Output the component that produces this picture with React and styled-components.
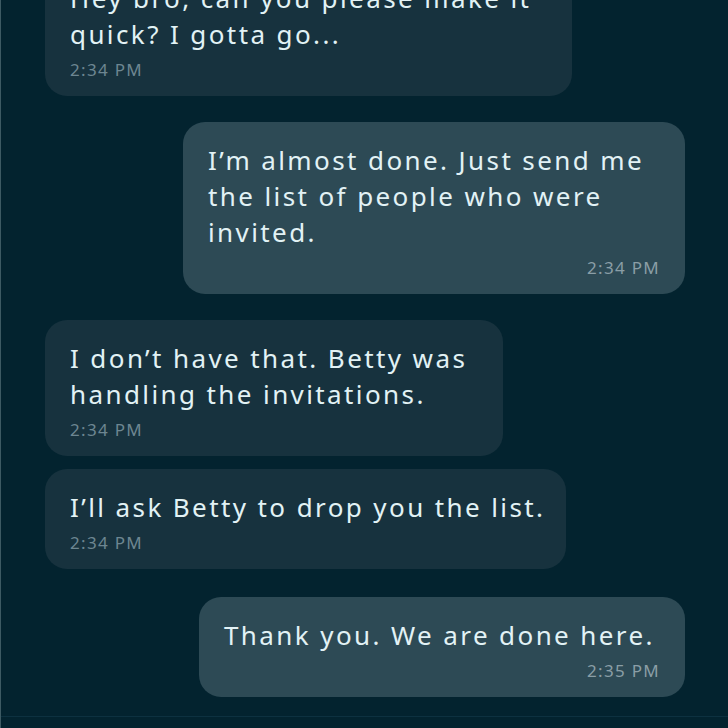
import React from "react";
import styled, { createGlobalStyle } from "styled-components";

const GlobalStyle = createGlobalStyle`
  html, body {
    margin: 0;
    padding: 0;
    background: #03232f;
    height: 100%;
    overflow: hidden;
  }
  #root {
    height: 100%;
  }
`;

const Screen = styled.div`
  position: relative;
  height: 728px;
  overflow: hidden;
  background: #03232f;
  border-left: 1px solid #3d5a63;
  box-sizing: border-box;
  font-family: "Noto Sans", "Lato", sans-serif;
`;

const Thread = styled.div`
  display: flex;
  flex-direction: column;
  padding: 0 43px 0 44px;
  margin-top: -40px;
`;

const Bubble = styled.div`
  box-sizing: border-box;
  width: ${p => p.$w}px;
  align-self: ${p => (p.$mine ? "flex-end" : "flex-start")};
  margin-top: ${p => p.$gap}px;
  padding: 20px 26px 16px 25px;
  border-radius: 22px;
  background: ${p => (p.$mine ? "#2d4a55" : "#17323e")};
  display: flex;
  flex-direction: column;
`;

const Text = styled.div`
  color: #e2f2f5;
  font-size: 26px;
  line-height: 36px;
  letter-spacing: 2.4px;
  white-space: nowrap;
`;

const Time = styled.div`
  margin-top: 8px;
  font-size: 17px;
  line-height: 20px;
  letter-spacing: 1.3px;
  color: ${p => (p.$mine ? "#8a9ea6" : "#6d8691")};
  align-self: ${p => (p.$mine ? "flex-end" : "flex-start")};
  margin-right: ${p => (p.$mine ? "-1px" : "0")};
`;

const BottomBar = styled.div`
  position: absolute;
  left: 0;
  right: 0;
  bottom: 0;
  height: 11px;
  border-top: 1px solid #0d3140;
  background: #03232f;
`;

const messages = [
  { mine: false, w: 527, gap: 0, lines: ["Hey bro, can you please make it", "quick? I gotta go..."], time: "2:34 PM" },
  { mine: true, w: 502, gap: 26, lines: ["I’m almost done. Just send me", "the list of people who were", "invited."], time: "2:34 PM" },
  { mine: false, w: 458, gap: 26, lines: ["I don’t have that. Betty was", "handling the invitations."], time: "2:34 PM" },
  { mine: false, w: 521, gap: 13, lines: ["I’ll ask Betty to drop you the list."], time: "2:34 PM" },
  { mine: true, w: 486, gap: 28, lines: ["Thank you. We are done here."], time: "2:35 PM" },
];

export default function App() {
  return (
    <>
      <GlobalStyle />
      <Screen>
        <Thread>
          {messages.map((m, i) => (
            <Bubble key={i} $mine={m.mine} $w={m.w} $gap={m.gap}>
              {m.lines.map((l, j) => (
                <Text key={j}>{l}</Text>
              ))}
              <Time $mine={m.mine}>{m.time}</Time>
            </Bubble>
          ))}
        </Thread>
        <BottomBar />
      </Screen>
    </>
  );
}
